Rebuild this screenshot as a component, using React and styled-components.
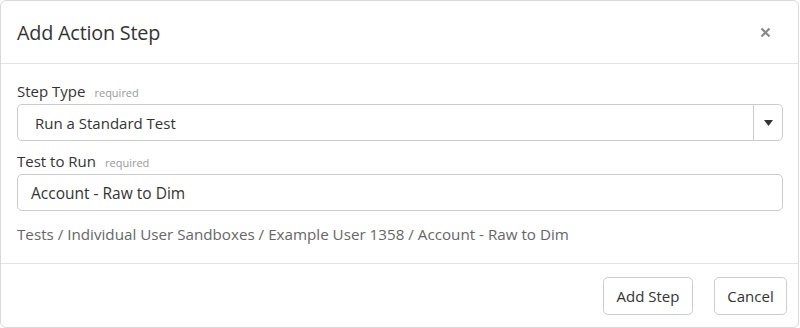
import React from "react";
import styled, { createGlobalStyle } from "styled-components";

const Global = createGlobalStyle`
  html, body { margin: 0; padding: 0; background: #fff; }
  body { font-family: "Open Sans", "Noto Sans", sans-serif; color: #333; }
  * { box-sizing: border-box; }
`;

const Modal = styled.div`
  width: 799px;
  height: 328px;
  border: 1px solid #d9d9d9;
  border-radius: 6px;
  background: #fff;
  display: flex;
  flex-direction: column;
  overflow: hidden;
`;

const Header = styled.div`
  height: 63px;
  border-bottom: 1px solid #e3e3e3;
  display: flex;
  align-items: center;
  justify-content: space-between;
  padding: 0 26px 0 16px;
  flex-shrink: 0;
`;

const Title = styled.h4`
  margin: 0;
  font-size: 19.8px;
  font-weight: 400;
  color: #333;
  letter-spacing: -0.2px;
`;

const Close = styled.button`
  border: 0;
  background: none;
  padding: 0;
  width: 14px;
  height: 14px;
  display: flex;
  align-items: center;
  justify-content: center;
  cursor: pointer;
`;

const Body = styled.div`
  padding: 17px 16px 0 16px;
  display: flex;
  flex-direction: column;
  height: 200px;
  border-bottom: 1px solid #e3e3e3;
  flex-shrink: 0;
`;

const Label = styled.label`
  display: flex;
  align-items: baseline;
  gap: 9px;
  height: 20px;
  font-size: 15px;
  line-height: 20px;
  color: #333;
  margin: ${(p) => (p.$first ? "0" : "10px")} 0 3px 0;
`;

const Required = styled.span`
  font-size: 11px;
  line-height: 20px;
  color: #999;
`;

const SelectBox = styled.div`
  height: 37px;
  width: 766px;
  border: 1px solid #ccc;
  border-radius: 5px;
  display: flex;
  align-items: stretch;
  flex-shrink: 0;
`;

const SelectValue = styled.div`
  flex: 1;
  display: flex;
  align-items: center;
  padding-left: 17px;
  font-size: 15px;
  color: #333;
`;

const ArrowZone = styled.div`
  width: 29px;
  border-left: 1px solid #ccc;
  display: flex;
  align-items: center;
  justify-content: center;
`;

const Input = styled.div`
  height: 37px;
  width: 766px;
  border: 1px solid #ccc;
  border-radius: 5px;
  display: flex;
  align-items: center;
  padding-left: 13px;
  font-size: 15.5px;
  color: #333;
  flex-shrink: 0;
`;

const Path = styled.div`
  margin-top: 13px;
  font-size: 15.2px;
  line-height: 20px;
  color: #666;
`;

const Footer = styled.div`
  flex: 1;
  display: flex;
  justify-content: flex-end;
  align-items: flex-start;
  gap: 21px;
  padding: 13px 11px 0 0;
`;

const Button = styled.button`
  height: 38px;
  width: ${(p) => p.$w}px;
  border: 1px solid #ccc;
  border-radius: 5px;
  background: #fff;
  font-family: inherit;
  font-size: 15px;
  color: #333;
  padding: 0;
  cursor: pointer;
`;

export default function App() {
  return (
    <>
      <Global />
      <Modal>
        <Header>
          <Title>Add Action Step</Title>
          <Close aria-label="Close">
            <svg width="11" height="11" viewBox="0 0 11 11">
              <path d="M1.5 1.5 L9.5 9.5 M9.5 1.5 L1.5 9.5" stroke="#888" strokeWidth="2.2" strokeLinecap="butt" />
            </svg>
          </Close>
        </Header>
        <Body>
          <Label $first>
            Step Type <Required>required</Required>
          </Label>
          <SelectBox>
            <SelectValue>Run a Standard Test</SelectValue>
            <ArrowZone>
              <svg width="9" height="6" viewBox="0 0 9 6">
                <path d="M0 0 H9 L4.5 6 Z" fill="#333" />
              </svg>
            </ArrowZone>
          </SelectBox>
          <Label>
            Test to Run <Required>required</Required>
          </Label>
          <Input>Account - Raw to Dim</Input>
          <Path>Tests / Individual User Sandboxes / Example User 1358 / Account - Raw to Dim</Path>
        </Body>
        <Footer>
          <Button $w={90}>Add Step</Button>
          <Button $w={73}>Cancel</Button>
        </Footer>
      </Modal>
    </>
  );
}
